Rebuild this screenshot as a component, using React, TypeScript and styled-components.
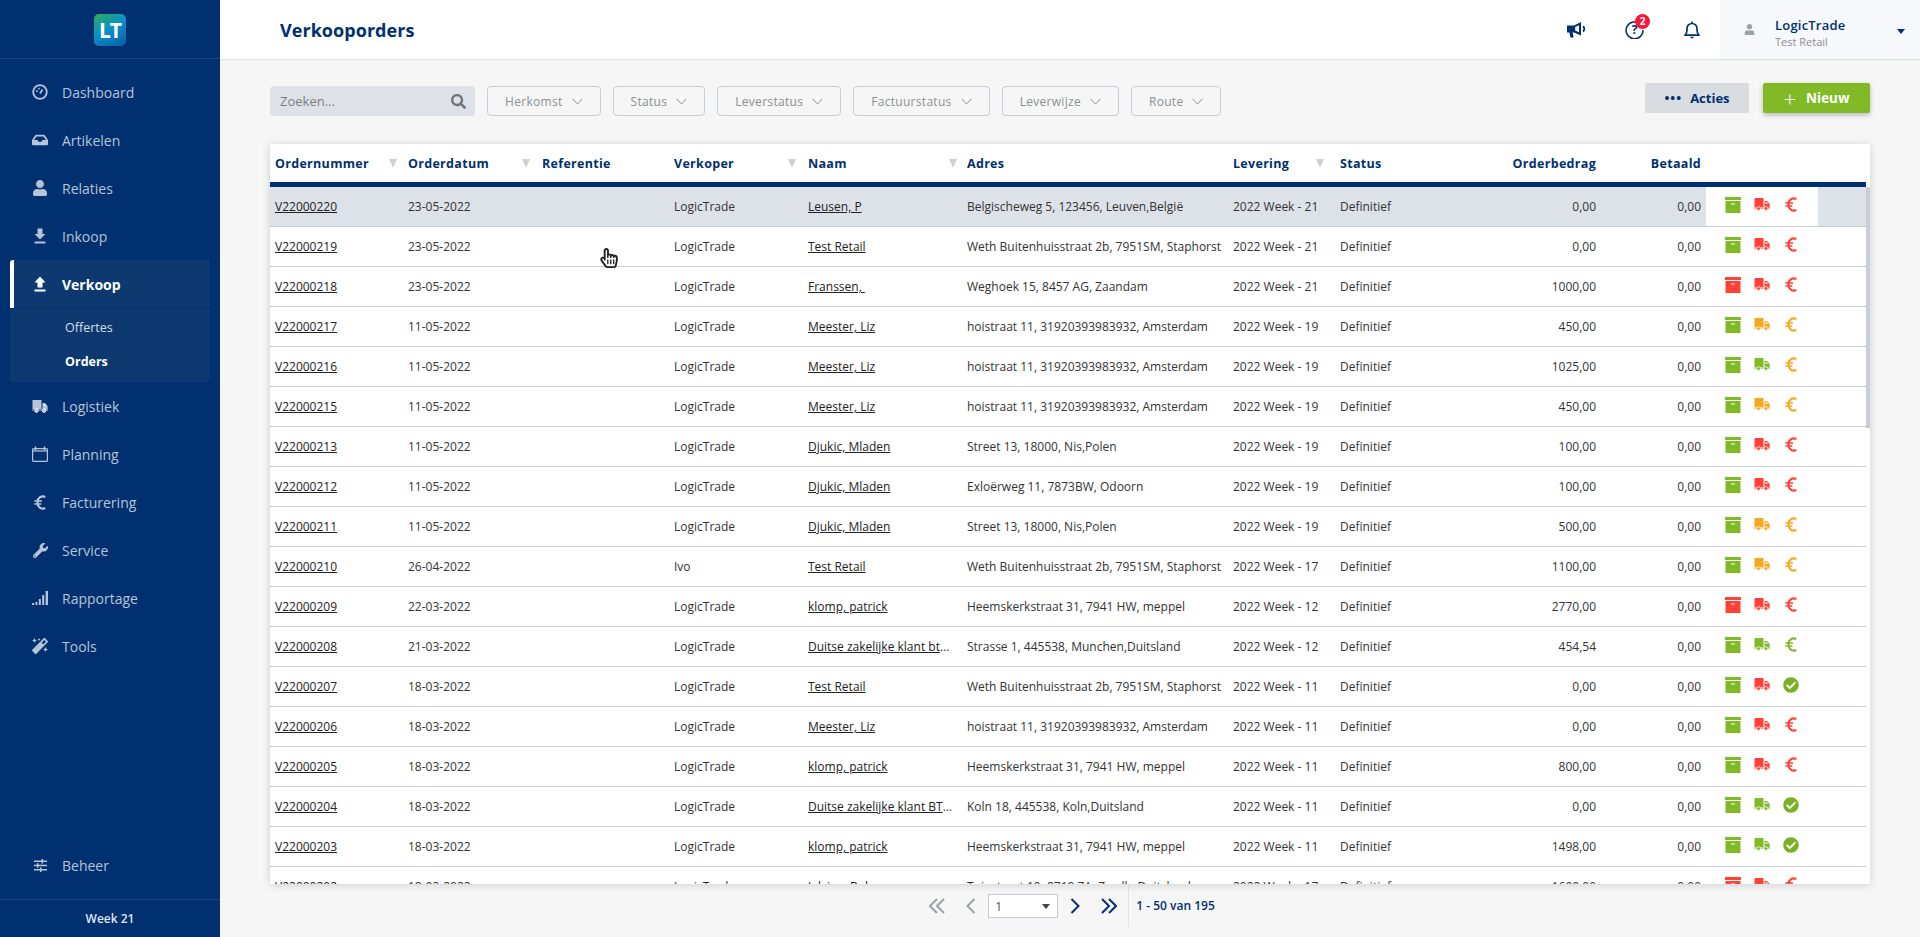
import React from 'react';
import styled, { createGlobalStyle } from 'styled-components';
import {
  FaCheckCircle,
  FaInbox,
  FaMagic,
  FaRegHandPointer,
  FaSearch,
  FaUser,
  FaWrench,
} from 'react-icons/fa';

const NAVY = '#003070';
const GREEN = '#82b926';
const RED = '#ff4136';
const ORANGE = '#f7a823';

type Tone = 'g' | 'r' | 'o';

interface Order {
  nr: string;
  date: string;
  seller: string;
  name: string;
  address: string;
  week: string;
  amount: string;
  box: Tone;
  truck: Tone;
  euro: Tone | 'check';
}

const orders: Order[] = [
  { nr: 'V22000220', date: '23-05-2022', seller: 'LogicTrade', name: 'Leusen, P', address: 'Belgischeweg 5, 123456, Leuven,België', week: '2022 Week - 21', amount: '0,00', box: 'g', truck: 'r', euro: 'r' },
  { nr: 'V22000219', date: '23-05-2022', seller: 'LogicTrade', name: 'Test Retail', address: 'Weth Buitenhuisstraat 2b, 7951SM, Staphorst', week: '2022 Week - 21', amount: '0,00', box: 'g', truck: 'r', euro: 'r' },
  { nr: 'V22000218', date: '23-05-2022', seller: 'LogicTrade', name: 'Franssen,\u00a0', address: 'Weghoek 15, 8457 AG, Zaandam', week: '2022 Week - 21', amount: '1000,00', box: 'r', truck: 'r', euro: 'r' },
  { nr: 'V22000217', date: '11-05-2022', seller: 'LogicTrade', name: 'Meester, Liz', address: 'hoistraat 11, 31920393983932, Amsterdam', week: '2022 Week - 19', amount: '450,00', box: 'g', truck: 'o', euro: 'o' },
  { nr: 'V22000216', date: '11-05-2022', seller: 'LogicTrade', name: 'Meester, Liz', address: 'hoistraat 11, 31920393983932, Amsterdam', week: '2022 Week - 19', amount: '1025,00', box: 'g', truck: 'g', euro: 'o' },
  { nr: 'V22000215', date: '11-05-2022', seller: 'LogicTrade', name: 'Meester, Liz', address: 'hoistraat 11, 31920393983932, Amsterdam', week: '2022 Week - 19', amount: '450,00', box: 'g', truck: 'o', euro: 'o' },
  { nr: 'V22000213', date: '11-05-2022', seller: 'LogicTrade', name: 'Djukic, Mladen', address: 'Street 13, 18000, Nis,Polen', week: '2022 Week - 19', amount: '100,00', box: 'g', truck: 'r', euro: 'r' },
  { nr: 'V22000212', date: '11-05-2022', seller: 'LogicTrade', name: 'Djukic, Mladen', address: 'Exloërweg 11, 7873BW, Odoorn', week: '2022 Week - 19', amount: '100,00', box: 'g', truck: 'r', euro: 'r' },
  { nr: 'V22000211', date: '11-05-2022', seller: 'LogicTrade', name: 'Djukic, Mladen', address: 'Street 13, 18000, Nis,Polen', week: '2022 Week - 19', amount: '500,00', box: 'g', truck: 'o', euro: 'o' },
  { nr: 'V22000210', date: '26-04-2022', seller: 'Ivo', name: 'Test Retail', address: 'Weth Buitenhuisstraat 2b, 7951SM, Staphorst', week: '2022 Week - 17', amount: '1100,00', box: 'g', truck: 'o', euro: 'o' },
  { nr: 'V22000209', date: '22-03-2022', seller: 'LogicTrade', name: 'klomp, patrick', address: 'Heemskerkstraat 31, 7941 HW, meppel', week: '2022 Week - 12', amount: '2770,00', box: 'r', truck: 'r', euro: 'r' },
  { nr: 'V22000208', date: '21-03-2022', seller: 'LogicTrade', name: 'Duitse zakelijke klant btw vrij', address: 'Strasse 1, 445538, Munchen,Duitsland', week: '2022 Week - 12', amount: '454,54', box: 'g', truck: 'g', euro: 'g' },
  { nr: 'V22000207', date: '18-03-2022', seller: 'LogicTrade', name: 'Test Retail', address: 'Weth Buitenhuisstraat 2b, 7951SM, Staphorst', week: '2022 Week - 11', amount: '0,00', box: 'g', truck: 'r', euro: 'check' },
  { nr: 'V22000206', date: '18-03-2022', seller: 'LogicTrade', name: 'Meester, Liz', address: 'hoistraat 11, 31920393983932, Amsterdam', week: '2022 Week - 11', amount: '0,00', box: 'g', truck: 'r', euro: 'r' },
  { nr: 'V22000205', date: '18-03-2022', seller: 'LogicTrade', name: 'klomp, patrick', address: 'Heemskerkstraat 31, 7941 HW, meppel', week: '2022 Week - 11', amount: '800,00', box: 'g', truck: 'r', euro: 'r' },
  { nr: 'V22000204', date: '18-03-2022', seller: 'LogicTrade', name: 'Duitse zakelijke klant BTW vrij', address: 'Koln 18, 445538, Koln,Duitsland', week: '2022 Week - 11', amount: '0,00', box: 'g', truck: 'g', euro: 'check' },
  { nr: 'V22000203', date: '18-03-2022', seller: 'LogicTrade', name: 'klomp, patrick', address: 'Heemskerkstraat 31, 7941 HW, meppel', week: '2022 Week - 11', amount: '1498,00', box: 'g', truck: 'g', euro: 'check' },
  { nr: 'V22000202', date: '18-03-2022', seller: 'LogicTrade', name: 'Jalving, Bob', address: 'Tuinstraat 10, 8719 ZA, Zwolle,Duitsland', week: '2022 Week - 17', amount: '1600,00', box: 'r', truck: 'r', euro: 'r' },
];

const toneColor = (t: Tone) => (t === 'g' ? GREEN : t === 'r' ? RED : ORANGE);

const BoxIcon = ({ color }: { color: string }) => (
  <svg width="16" height="16" viewBox="0 0 16 16">
    <rect x="0" y="0" width="16" height="3" fill={color} />
    <rect x="0.5" y="4" width="15" height="12" fill={color} />
    <rect x="6" y="6.5" width="4" height="1" fill="#fff" />
  </svg>
);

const TruckIcon = ({ color }: { color: string }) => (
  <svg width="16" height="13" viewBox="0 0 16 13">
    <rect x="0.5" y="0" width="9" height="9" fill={color} />
    <path d="M10.5 3H13l2.6 3v3.5h-5.1z" fill={color} />
    <path d="M11.6 4h1.1l1.3 1.8h-2.4z" fill="#fff" />
    <rect x="0" y="9.5" width="16" height="1" fill={color} />
    <circle cx="4.5" cy="10.5" r="1.9" fill={color} stroke="#fff" strokeWidth="0.7" />
    <circle cx="12" cy="10.5" r="1.9" fill={color} stroke="#fff" strokeWidth="0.7" />
  </svg>
);

const EuroIcon = ({ color = 'currentColor' }: { color?: string }) => (
  <svg width="12" height="15" viewBox="0 0 12 15" fill="none" stroke={color}>
    <path d="M11.3 2A5.4 5.4 0 0 0 3.6 7.5 5.4 5.4 0 0 0 11.3 13" strokeWidth="2.2" />
    <path d="M0.3 6H8M0.3 9H7.4" strokeWidth="1.3" />
  </svg>
);

const Gauge = () => (
  <svg width="16" height="16" viewBox="0 0 16 16" fill="none" stroke="currentColor">
    <circle cx="8" cy="8" r="6.8" strokeWidth="1.8" />
    <path d="M8 9.5 10.5 5.5" strokeWidth="1.8" />
    <circle cx="4.8" cy="7" r="0.9" fill="currentColor" stroke="none" />
    <circle cx="7" cy="4.6" r="0.9" fill="currentColor" stroke="none" />
  </svg>
);

const TrayArrow = ({ up }: { up?: boolean }) => (
  <svg width="12" height="16" viewBox="0 0 12 16" fill="currentColor">
    <path d={up ? 'M6 0.5 11.5 6.5H8.5V11.5H3.5V6.5H0.5z' : 'M3.5 0.5H8.5V6H11.5L6 11.5 0.5 6H3.5z'} />
    <rect x="0.5" y="13.5" width="11" height="2" />
  </svg>
);

const Calendar = () => (
  <svg width="16" height="16" viewBox="0 0 16 16" fill="none" stroke="currentColor" strokeWidth="1.2">
    <rect x="0.6" y="2.6" width="14.8" height="12.8" rx="1" />
    <path d="M3.5 0.5v4M12.5 0.5v4" strokeWidth="1.5" />
    <path d="M1 5h14" strokeWidth="1.2" />
  </svg>
);

const Bars = () => (
  <svg width="16" height="14" viewBox="0 0 16 14" fill="currentColor">
    <rect x="0" y="12" width="2" height="2" />
    <rect x="3.4" y="11" width="2" height="3" />
    <rect x="6.8" y="8" width="2" height="6" />
    <rect x="10.2" y="4" width="2" height="10" />
    <rect x="13.6" y="0" width="2.4" height="14" />
  </svg>
);

const Sliders = () => (
  <svg width="13" height="13" viewBox="0 0 13 13" fill="currentColor">
    <rect x="0" y="1.5" width="13" height="1.5" />
    <rect x="0" y="5.7" width="13" height="1.5" />
    <rect x="0" y="10" width="13" height="1.5" />
    <rect x="7.5" y="0" width="1.5" height="4.5" />
    <rect x="3" y="4.2" width="1.5" height="4.5" />
    <rect x="6" y="8.5" width="1.5" height="4.5" />
  </svg>
);

const Chevron = () => (
  <svg width="11" height="7" viewBox="0 0 11 7" fill="none" stroke="#8b9097" strokeWidth="1">
    <path d="M0.5 0.8 5.5 6 10.5 0.8" />
  </svg>
);

const Pager = ({ double, left, muted }: { double?: boolean; left?: boolean; muted?: boolean }) => (
  <svg width="16" height="16" viewBox="0 0 16 16" fill="none" stroke={muted ? '#9da3ab' : NAVY} strokeWidth="2">
    <g transform={left ? 'matrix(-1 0 0 1 16 0)' : undefined}>
      {double ? (
        <>
          <path d="M1 1 8 8 1 15" />
          <path d="M8 1 15 8 8 15" />
        </>
      ) : (
        <path d="M4.5 1 11.5 8 4.5 15" />
      )}
    </g>
  </svg>
);

const Megaphone = () => (
  <svg width="19" height="16" viewBox="0 0 19 16">
    <path d="M0 3.5H7L14 0V13.5L7 10.5H5.6L6.6 15.5H3.4L2.4 10.5H0z" fill={NAVY} />
    <path d="M8.2 5 12 3.2V10.3L8.2 8.6z" fill="#fff" />
    <path d="M16 4.2c1.7 1 1.7 4.2 0 5.2" fill="none" stroke={NAVY} strokeWidth="1.8" />
  </svg>
);

const QuestionBubble = () => (
  <svg width="19" height="19" viewBox="0 0 19 19" fill="none">
    <path d="M15.3 4.3A8.4 8.4 0 1 0 17.9 10" stroke={NAVY} strokeWidth="1.5" />
    <text x="9.5" y="14" textAnchor="middle" fontFamily="Open Sans, sans-serif" fontSize="12" fontWeight="700" fill={NAVY}>
      ?
    </text>
  </svg>
);

const BellIcon = () => (
  <svg width="16" height="18" viewBox="0 0 16 18" fill="none" stroke={NAVY}>
    <path d="M1 14.2c1.4-1.2 2-2.6 2-5.2V7.5a5 5 0 0 1 10 0V9c0 2.6.6 4 2 5.2z" strokeWidth="1.7" strokeLinejoin="round" />
    <path d="M8 0.4v1.6" strokeWidth="1.6" />
    <path d="M6.3 15.8a1.7 1.7 0 0 0 3.4 0z" fill={NAVY} stroke="none" />
  </svg>
);

const navTop = [
  { label: 'Dashboard', icon: <Gauge /> },
  { label: 'Artikelen', icon: <FaInbox size={16} /> },
  { label: 'Relaties', icon: <FaUser size={16} /> },
  { label: 'Inkoop', icon: <TrayArrow /> },
];

const navBottom = [
  { label: 'Logistiek', icon: <TruckIcon color="currentColor" /> },
  { label: 'Planning', icon: <Calendar /> },
  { label: 'Facturering', icon: <EuroIcon /> },
  { label: 'Service', icon: <FaWrench size={15} /> },
  { label: 'Rapportage', icon: <Bars /> },
  { label: 'Tools', icon: <FaMagic size={16} /> },
];

const filters = ['Herkomst', 'Status', 'Leverstatus', 'Factuurstatus', 'Leverwijze', 'Route'];

const columns = [
  { label: 'Ordernummer', width: 133, sort: 1 },
  { label: 'Orderdatum', width: 134, sort: 2 },
  { label: 'Referentie', width: 132 },
  { label: 'Verkoper', width: 134, sort: 2 },
  { label: 'Naam', width: 159, sort: 0 },
  { label: 'Adres', width: 266 },
  { label: 'Levering', width: 107, sort: 6 },
  { label: 'Status', width: 111 },
  { label: 'Orderbedrag', width: 155, right: true },
  { label: 'Betaald', width: 105, right: true },
  { label: '', width: 112 },
  { label: '', width: 48 },
];

export default function App() {
  return (
    <>
      <GlobalStyle />
      <Shell>
        <Sidebar>
          <LogoBar>
            <LogoMark>LT</LogoMark>
          </LogoBar>
          <Nav>
            {navTop.map((item) => (
              <NavItem key={item.label}>
                <NavIcon>{item.icon}</NavIcon>
                {item.label}
              </NavItem>
            ))}
            <NavItem $active>
              <NavIcon>
                <TrayArrow up />
              </NavIcon>
              Verkoop
            </NavItem>
            <SubMenu>
              <SubItem>Offertes</SubItem>
              <SubItem $active>Orders</SubItem>
            </SubMenu>
            {navBottom.map((item) => (
              <NavItem key={item.label}>
                <NavIcon>{item.icon}</NavIcon>
                {item.label}
              </NavItem>
            ))}
          </Nav>
          <NavItem>
            <NavIcon>
              <Sliders />
            </NavIcon>
            Beheer
          </NavItem>
          <WeekBar>Week 21</WeekBar>
        </Sidebar>

        <Main>
          <TopBar>
            <Title>Verkooporders</Title>
            <TopIcons>
              <TopIcon>
                <Megaphone />
              </TopIcon>
              <TopIcon>
                <QuestionBubble />
                <Badge>2</Badge>
              </TopIcon>
              <TopIcon>
                <BellIcon />
              </TopIcon>
            </TopIcons>
            <UserBox>
              <UserGlyph>
                <FaUser size={11} />
              </UserGlyph>
              <UserText>
                <UserName>LogicTrade</UserName>
                <UserCompany>Test Retail</UserCompany>
              </UserText>
              <UserCaret />
            </UserBox>
          </TopBar>

          <Toolbar>
            <FilterGroup>
              <SearchBox>
                <SearchInput placeholder="Zoeken..." />
                <FaSearch size={15} color="#6f7479" />
              </SearchBox>
              {filters.map((f) => (
                <FilterButton key={f}>
                  {f}
                  <Chevron />
                </FilterButton>
              ))}
            </FilterGroup>
            <ActionGroup>
              <ActionsButton>
                <Dots>•••</Dots>
                Acties
              </ActionsButton>
              <NewButton>
                <PlusSign>+</PlusSign>
                Nieuw
              </NewButton>
            </ActionGroup>
          </Toolbar>

          <Card>
            <TableWrap>
              <OrderTable>
                <colgroup>
                  {columns.map((c, i) => (
                    <col key={i} width={c.width} />
                  ))}
                </colgroup>
                <thead>
                  <tr>
                    {columns.map((c, i) => (
                      <HeadCell key={i} $right={c.right}>
                        <HeadInner $right={c.right}>
                          {c.label}
                          {c.sort !== undefined && <SortMark $offset={c.sort} />}
                        </HeadInner>
                      </HeadCell>
                    ))}
                  </tr>
                </thead>
                <tbody>
                  {orders.map((o, i) => (
                    <OrderRow key={o.nr} $selected={i === 0}>
                      <Cell>
                        <OrderLink>{o.nr}</OrderLink>
                      </Cell>
                      <Cell>{o.date}</Cell>
                      <Cell />
                      <Cell>{o.seller}</Cell>
                      <Cell>
                        <OrderLink>{o.name}</OrderLink>
                      </Cell>
                      <Cell>{o.address}</Cell>
                      <Cell>{o.week}</Cell>
                      <Cell>Definitief</Cell>
                      <Cell $right>{o.amount}</Cell>
                      <Cell $right>0,00</Cell>
                      <IconCell>
                        <StatusIcons>
                          <StatusIcon>
                            <BoxIcon color={toneColor(o.box)} />
                          </StatusIcon>
                          <StatusIcon>
                            <TruckIcon color={toneColor(o.truck)} />
                          </StatusIcon>
                          <StatusIcon>
                            {o.euro === 'check' ? (
                              <FaCheckCircle size={16} color="#7cb024" />
                            ) : (
                              <EuroIcon color={toneColor(o.euro)} />
                            )}
                          </StatusIcon>
                        </StatusIcons>
                      </IconCell>
                      <Cell />
                    </OrderRow>
                  ))}
                </tbody>
              </OrderTable>
            </TableWrap>
            <ScrollTrack>
              <ScrollThumb />
            </ScrollTrack>
            <HandCursor>
              <FaRegHandPointer size={20} />
            </HandCursor>
          </Card>

          <Pagination>
            <PagerButton>
              <Pager double left muted />
            </PagerButton>
            <PagerButton>
              <Pager left muted />
            </PagerButton>
            <PageSelect>
              1
              <PageCaret />
            </PageSelect>
            <PagerButton>
              <Pager />
            </PagerButton>
            <PagerButton>
              <Pager double />
            </PagerButton>
            <PageInfo>1 - 50 van 195</PageInfo>
          </Pagination>
        </Main>
      </Shell>
    </>
  );
}

const GlobalStyle = createGlobalStyle`
  html, body {
    margin: 0;
    height: 100%;
    overflow: hidden;
    background: #f6f6f6;
    font-family: "Open Sans", "Liberation Sans", sans-serif;
  }
  * { box-sizing: border-box; }
`;

const Shell = styled.div`
  display: flex;
  height: 100vh;
`;

const Sidebar = styled.aside`
  width: 220px;
  flex: none;
  display: flex;
  flex-direction: column;
  background: ${NAVY};
  color: #b7c4d8;
`;

const LogoBar = styled.div`
  height: 59px;
  flex: none;
  display: flex;
  justify-content: center;
  align-items: center;
  border-bottom: 1px solid #1b4480;
`;

const LogoMark = styled.div`
  width: 32px;
  height: 32px;
  margin-top: 2px;
  border-radius: 5px;
  background: linear-gradient(150deg, #35a852 0%, #0a93c9 45%, #0a5aa8 100%);
  color: #fff;
  font-size: 21px;
  font-weight: 700;
  letter-spacing: -1px;
  line-height: 32px;
  text-align: center;
`;

const Nav = styled.nav`
  flex: 1;
  padding: 9px 10px 0;
`;

const NavItem = styled.div<{ $active?: boolean }>`
  height: 48px;
  display: flex;
  align-items: center;
  padding-left: ${(p) => (p.$active ? '18px' : '22px')};
  font-size: 14px;
  font-weight: ${(p) => (p.$active ? 700 : 400)};
  color: ${(p) => (p.$active ? '#fff' : '#b7c4d8')};
  background: ${(p) => (p.$active ? '#0d3870' : 'transparent')};
  border-left: ${(p) => (p.$active ? '4px solid #fff' : 'none')};
  border-radius: ${(p) => (p.$active ? '3px 3px 0 0' : '0')};
  aside > & {
    margin: 0 10px 10px;
  }
`;

const NavIcon = styled.span`
  width: 16px;
  height: 16px;
  margin-right: 14px;
  flex: none;
  display: flex;
  align-items: center;
  justify-content: center;
`;

const SubMenu = styled.div`
  height: 73px;
  margin-top: 1px;
  padding-top: 2px;
  background: #0d3870;
  border-radius: 0 0 4px 4px;
`;

const SubItem = styled.div<{ $active?: boolean }>`
  height: 34px;
  line-height: 34px;
  padding-left: 55px;
  font-size: 12.5px;
  font-weight: ${(p) => (p.$active ? 700 : 400)};
  color: ${(p) => (p.$active ? '#fff' : '#d7dfea')};
`;

const WeekBar = styled.div`
  height: 38px;
  flex: none;
  border-top: 1px solid #1b4480;
  text-align: center;
  line-height: 37px;
  font-size: 12px;
  font-weight: 600;
  color: #dfe6f0;
`;

const Main = styled.main`
  flex: 1;
  min-width: 0;
  display: flex;
  flex-direction: column;
`;

const TopBar = styled.header`
  height: 60px;
  flex: none;
  display: flex;
  align-items: stretch;
  background: #fff;
  border-bottom: 1px solid #dcdfe3;
`;

const Title = styled.h1`
  flex: 1;
  margin: 0;
  padding-left: 60px;
  align-self: center;
  font-size: 18px;
  font-weight: 700;
  letter-spacing: 0.05px;
  color: ${NAVY};
`;

const TopIcons = styled.div`
  display: flex;
  align-items: center;
  gap: 38px;
  padding-right: 18px;
`;

const TopIcon = styled.div`
  position: relative;
  width: 20px;
  height: 20px;
  display: flex;
  align-items: center;
  justify-content: center;
  color: ${NAVY};
`;

const Badge = styled.span`
  position: absolute;
  top: -6px;
  left: 11px;
  width: 15px;
  height: 15px;
  border-radius: 50%;
  background: #f6173c;
  color: #fff;
  font-size: 10px;
  font-weight: 700;
  line-height: 15px;
  text-align: center;
`;

const UserBox = styled.div`
  width: 200px;
  display: flex;
  align-items: center;
  padding-left: 24px;
  background: #f7f8fb;
`;

const UserGlyph = styled.span`
  width: 12px;
  margin-right: 19px;
  color: #9aa1ab;
  display: flex;
`;

const UserText = styled.div`
  flex: 1;
  margin-top: 7px;
`;

const UserName = styled.div`
  font-size: 13px;
  font-weight: 600;
  line-height: 17px;
  letter-spacing: 0.2px;
  color: ${NAVY};
`;

const UserCompany = styled.div`
  font-size: 11px;
  line-height: 16px;
  color: #8a8f95;
`;

const UserCaret = styled.span`
  width: 0;
  height: 0;
  margin: 3px 15px 0 0;
  border-left: 4px solid transparent;
  border-right: 4px solid transparent;
  border-top: 5px solid ${NAVY};
`;

const Toolbar = styled.div`
  flex: none;
  display: flex;
  justify-content: space-between;
  align-items: flex-start;
  padding: 23px 50px 0;
  height: 84px;
`;

const FilterGroup = styled.div`
  display: flex;
  gap: 12px;
  margin-top: 3px;
`;

const SearchBox = styled.div`
  width: 205px;
  height: 30px;
  display: flex;
  align-items: center;
  padding: 0 9px 0 10px;
  background: #dee2e8;
  border-radius: 4px;
`;

const SearchInput = styled.input`
  flex: 1;
  min-width: 0;
  padding: 0;
  border: 0;
  outline: 0;
  background: transparent;
  font-family: inherit;
  font-size: 13px;
  &::placeholder {
    color: #7c8085;
    opacity: 1;
  }
`;

const FilterButton = styled.button`
  height: 30px;
  padding: 0 17px;
  display: flex;
  align-items: center;
  gap: 9px;
  background: transparent;
  border: 1px solid #c9ced6;
  border-radius: 4px;
  font-family: inherit;
  font-size: 12px;
  letter-spacing: 0.3px;
  color: #8b9097;
`;

const ActionGroup = styled.div`
  display: flex;
  gap: 14px;
`;

const ActionsButton = styled.button`
  width: 104px;
  height: 30px;
  border: 0;
  border-radius: 2px;
  background: #d9dce0;
  display: flex;
  align-items: center;
  justify-content: center;
  gap: 8px;
  font-family: inherit;
  font-size: 13px;
  font-weight: 700;
  color: ${NAVY};
`;

const Dots = styled.span`
  font-size: 13px;
  letter-spacing: 1px;
`;

const NewButton = styled.button`
  width: 107px;
  height: 30px;
  border: 0;
  border-radius: 2px;
  background: ${GREEN};
  box-shadow: 0 2px 5px rgba(0, 0, 0, 0.25);
  display: flex;
  align-items: center;
  justify-content: center;
  gap: 10px;
  font-family: inherit;
  font-size: 13.5px;
  font-weight: 700;
  color: #fff;
`;

const PlusSign = styled.span`
  font-size: 22px;
  font-weight: 300;
  line-height: 1;
`;

const Card = styled.section`
  position: relative;
  flex: 1;
  min-height: 0;
  margin: 0 50px;
  display: flex;
  background: #fff;
  box-shadow: 0 1px 8px rgba(0, 0, 0, 0.16);
  overflow: hidden;
`;

const TableWrap = styled.div`
  flex: 1;
  min-width: 0;
  overflow: hidden;
`;

const OrderTable = styled.table`
  width: 1596px;
  table-layout: fixed;
  border-collapse: separate;
  border-spacing: 0;
`;

const HeadCell = styled.th<{ $right?: boolean }>`
  height: 43px;
  padding: 0 5px;
  border-bottom: 5px solid ${NAVY};
  font-size: 12.5px;
  font-weight: 700;
  letter-spacing: 0.3px;
  color: ${NAVY};
  text-align: ${(p) => (p.$right ? 'right' : 'left')};
`;

const HeadInner = styled.div<{ $right?: boolean }>`
  display: flex;
  align-items: center;
  justify-content: ${(p) => (p.$right ? 'flex-end' : 'space-between')};
`;

const SortMark = styled.span<{ $offset: number }>`
  width: 0;
  height: 0;
  margin-right: ${(p) => p.$offset}px;
  border-left: 4px solid transparent;
  border-right: 4px solid transparent;
  border-top: 9px solid #cdd0d5;
`;

const OrderRow = styled.tr<{ $selected?: boolean }>`
  height: 40px;
  background: ${(p) => (p.$selected ? '#dde1e8' : '#fff')};
`;

const Cell = styled.td<{ $right?: boolean }>`
  padding: 0 5px;
  border-bottom: 1px solid #c8ced8;
  font-size: 12px;
  color: #333;
  white-space: nowrap;
  overflow: hidden;
  text-overflow: ellipsis;
  text-align: ${(p) => (p.$right ? 'right' : 'left')};
`;

const IconCell = styled(Cell)`
  padding: 0 0 0 19px;
  background: #fff;
`;

const OrderLink = styled.a`
  color: #222;
  text-decoration: underline;
`;

const StatusIcons = styled.div`
  display: flex;
  align-items: center;
  gap: 13px;
  padding-bottom: 4px;
`;

const StatusIcon = styled.span`
  width: 16px;
  height: 16px;
  display: flex;
  align-items: center;
  justify-content: center;
`;

const ScrollTrack = styled.div`
  width: 4px;
  flex: none;
  padding-top: 43px;
`;

const ScrollThumb = styled.div`
  height: 241px;
  background: #c9cfd9;
`;

const HandCursor = styled.span`
  position: absolute;
  left: 329px;
  top: 104px;
  color: #222;
  line-height: 0;
`;

const Pagination = styled.nav`
  height: 53px;
  flex: none;
  display: flex;
  align-items: center;
  justify-content: center;
  padding: 0 5px 10px 0;
`;

const PagerButton = styled.span`
  width: 34px;
  display: flex;
  justify-content: center;
`;

const PageSelect = styled.div`
  position: relative;
  width: 70px;
  height: 24px;
  padding-left: 6px;
  background: #fff;
  border: 1px solid #c5cbd6;
  font-size: 12px;
  line-height: 24px;
  color: #555;
`;

const PageCaret = styled.span`
  position: absolute;
  right: 7px;
  top: 9px;
  border-left: 4px solid transparent;
  border-right: 4px solid transparent;
  border-top: 5px solid #444;
`;

const PageInfo = styled.span`
  height: 42px;
  margin-left: 2px;
  padding-left: 7px;
  display: flex;
  align-items: center;
  border-left: 1px solid #e2e4e7;
  font-size: 12px;
  font-weight: 600;
  color: ${NAVY};
`;
